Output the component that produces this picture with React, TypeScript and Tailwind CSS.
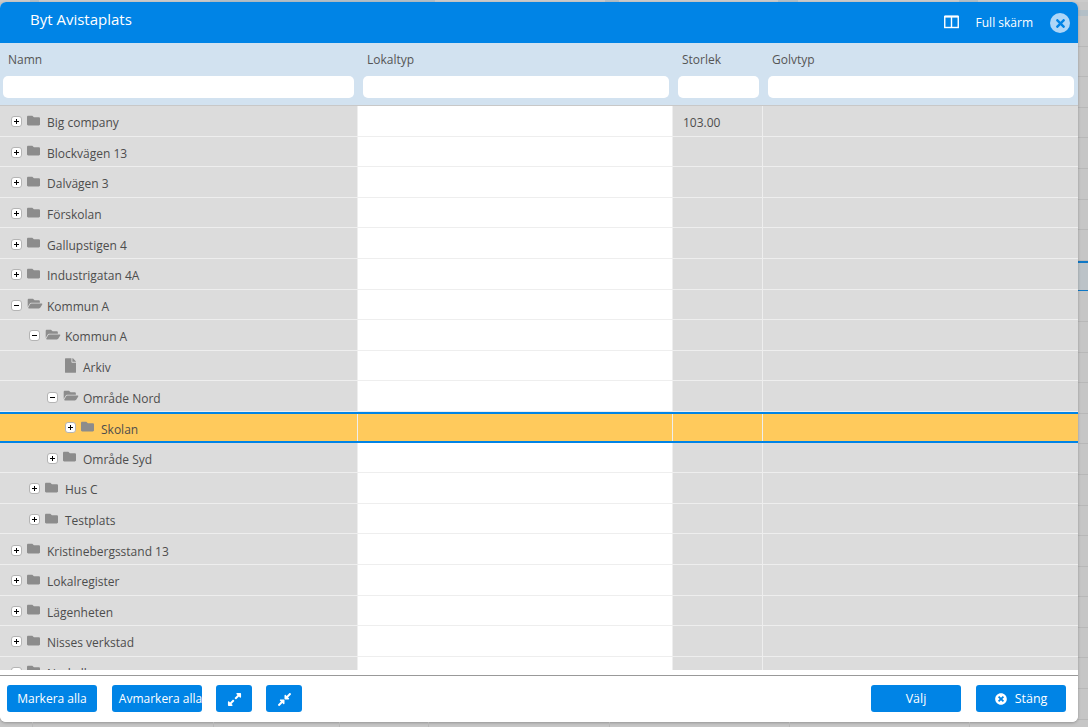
import { FaFolder, FaFolderOpen, FaFile, FaExpandAlt, FaCompressAlt, FaTimesCircle, FaTimes } from 'react-icons/fa';

type Row = { name: string; depth: number; kind: 'closed' | 'open' | 'file'; size?: string; selected?: boolean };

const rows: Row[] = [
  { name: 'Big company', depth: 0, kind: 'closed', size: '103.00' },
  { name: 'Blockvägen 13', depth: 0, kind: 'closed' },
  { name: 'Dalvägen 3', depth: 0, kind: 'closed' },
  { name: 'Förskolan', depth: 0, kind: 'closed' },
  { name: 'Gallupstigen 4', depth: 0, kind: 'closed' },
  { name: 'Industrigatan 4A', depth: 0, kind: 'closed' },
  { name: 'Kommun A', depth: 0, kind: 'open' },
  { name: 'Kommun A', depth: 1, kind: 'open' },
  { name: 'Arkiv', depth: 2, kind: 'file' },
  { name: 'Område Nord', depth: 2, kind: 'open' },
  { name: 'Skolan', depth: 3, kind: 'closed', selected: true },
  { name: 'Område Syd', depth: 2, kind: 'closed' },
  { name: 'Hus C', depth: 1, kind: 'closed' },
  { name: 'Testplats', depth: 1, kind: 'closed' },
  { name: 'Kristinebergsstand 13', depth: 0, kind: 'closed' },
  { name: 'Lokalregister', depth: 0, kind: 'closed' },
  { name: 'Lägenheten', depth: 0, kind: 'closed' },
  { name: 'Nisses verkstad', depth: 0, kind: 'closed' },
  { name: 'Nyckelhus', depth: 0, kind: 'closed' },
];

const indent = ['w-[11px]', 'w-[29px]', 'w-[47px]', 'w-[65px]'];
const columns = 'grid grid-cols-[358px_315px_90px_315px]';

function Toggle({ open }: { open: boolean }) {
  return (
    <span className="relative flex h-[11px] w-[11px] shrink-0 items-center justify-center rounded-[3px] border border-[#b4b4b4] bg-white">
      <span className="h-px w-[5px] bg-black" />
      {!open && <span className="absolute h-[5px] w-px bg-black" />}
    </span>
  );
}

function TreeRow({ row }: { row: Row }) {
  const tone = row.selected ? 'bg-[#ffca5c]' : 'bg-[#dcdcdc]';
  const edge = row.selected
    ? 'border-t-2 border-b-2 border-[#0084e6]'
    : 'border-b border-[#eeeeee]';
  return (
    <div className={`${columns} h-[30.6px] shrink-0 ${edge} ${row.selected ? 'bg-[#ffca5c]' : ''}`}>
      <div className={`flex items-center ${tone} border-r border-[#eeeeee] ${row.selected ? 'pt-[1px]' : 'pt-[2px]'}`}>
        <span className={`${indent[row.depth]} shrink-0`} />
        {row.kind === 'file' ? (
          <span className="flex w-[36px] shrink-0 justify-end pr-[7px]">
            <FaFile className="mb-[3px] h-[15px] w-[11px] text-[#8c8c8c]" />
          </span>
        ) : (
          <>
            <Toggle open={row.kind === 'open'} />
            <span className="flex w-[25px] shrink-0 pl-[5px]">
              {row.kind === 'open' ? (
                <FaFolderOpen className="mb-[3px] h-[13px] w-[16px] text-[#8c8c8c]" />
              ) : (
                <FaFolder className="mb-[3px] h-[13px] w-[13px] text-[#8c8c8c]" />
              )}
            </span>
          </>
        )}
        <span className={`whitespace-nowrap text-[12px] text-[#4d4d4d] ${row.selected ? 'pt-[5px]' : 'pt-[3px]'}`}>{row.name}</span>
      </div>
      <div className={`${row.selected ? 'bg-[#ffca5c]' : 'bg-white'} border-r border-[#eeeeee]`} />
      <div className={`flex items-center pl-[10px] pt-[4px] text-[12px] text-[#4d4d4d] ${tone} border-r border-[#eeeeee]`}>
        {row.size}
      </div>
      <div className={tone} />
    </div>
  );
}

function FilterCell({ label, pad, labelPad }: { label: string; pad: string; labelPad: string }) {
  return (
    <div className={`flex flex-col ${pad}`}>
      <span className={`mt-[8px] h-[25px] ${labelPad} text-[12px] font-medium leading-[18px] text-[#555555]`}>{label}</span>
      <div className="h-[22px] rounded-[5px] bg-white" />
    </div>
  );
}

function Btn({ children, wide, large }: { children: React.ReactNode; wide?: boolean; large?: boolean }) {
  return (
    <button className={`flex h-[27px] items-center justify-center rounded-[3px] bg-[#0084e6] pt-[1px] text-white ${large ? 'text-[12.5px]' : 'text-[12px]'} ${wide ? 'w-[90px]' : 'w-[36px]'}`}>
      {children}
    </button>
  );
}

const lineRows = Array.from({ length: 24 });
const bottomTicks = ['w-[33px]', 'w-[181px]', 'w-[126px]', 'w-[89px]', 'w-[181px]', 'w-[180px]', 'w-[180px]'];

export default function App() {
  return (
    <div className="relative h-[727px] w-[1088px] overflow-hidden bg-[#c6c6c6]" style={{ fontFamily: '"Open Sans", "Noto Sans", sans-serif' }}>
      {/* dimmed page behind the dialog */}
      <div className="flex h-[2px] bg-[#cbcbcb]">
        <span className="ml-[30px] w-[9px] bg-[#b3bfc7]" />
        <span className="ml-[171px] w-[225px] bg-[#b3bfc7]" />
        <span className="ml-[170px] w-[14px] bg-[#b3bfc7]" />
        <span className="ml-[159px] w-[20px] bg-[#b3bfc7]" />
        <span className="ml-[161px] w-[19px] bg-[#b3bfc7]" />
      </div>
      <div className="ml-auto w-[10px]">
        <div className="mt-[8px] h-[6px] bg-[#b3bfc7]" />
        {lineRows.map((_, i) => (
          <div
            key={i}
            className={`h-[30.6px] border-b ${i === 8 ? 'border-y-2 border-[#0e78c6] bg-[#bcc3c8]' : 'border-[#b8b8b8]'}`}
          />
        ))}
      </div>

      {/* dialog */}
      <div className="absolute left-0 top-[2px] flex h-[720px] w-[1078px] flex-col overflow-hidden rounded-[6px] bg-white shadow-[0_1px_3px_rgba(0,0,0,0.25)]">
        <div className="flex h-[41px] shrink-0 items-center bg-[#0084e6] pl-[30px] pr-[8px] text-white">
          <span className="mb-[6px] text-[15px] font-medium">Byt Avistaplats</span>
          <svg className="mb-[1px] ml-auto h-[14px] w-[15px]" viewBox="0 0 15 14" fill="none" stroke="white">
            <rect x="0.75" y="1.5" width="13.5" height="11" strokeWidth="1.4" />
            <path d="M0.75 1.5h13.5" strokeWidth="2" />
            <path d="M7.5 1.5v11" strokeWidth="1.4" />
          </svg>
          <span className="ml-[17px] text-[12px]">Full skärm</span>
          <span className="ml-[17px] mt-[1px] flex h-[20px] w-[20px] items-center justify-center rounded-full bg-[#aed6f7]">
            <FaTimes className="h-[13px] w-[13px] text-[#0084e6]" />
          </span>
        </div>

        <div className={`${columns} h-[63px] shrink-0 border-b border-[#c8c8c8] bg-[#d2e2f0]`}>
          <FilterCell label="Namn" pad="pl-[3px] pr-[4px]" labelPad="pl-[5px]" />
          <FilterCell label="Lokaltyp" pad="pl-[5px] pr-[4px]" labelPad="pl-[4px]" />
          <FilterCell label="Storlek" pad="pl-[5px] pr-[4px]" labelPad="pl-[4px]" />
          <FilterCell label="Golvtyp" pad="pl-[5px] pr-[4px]" labelPad="pl-[4px]" />
        </div>

        <div className="flex min-h-0 flex-1 flex-col overflow-hidden">
          {rows.map((row, i) => (
            <TreeRow key={i} row={row} />
          ))}
        </div>

        <div className="h-[5px] shrink-0 bg-white" />
        <div className="flex h-[47px] shrink-0 items-start border-t border-[#999999] bg-white pl-[7px] pr-[12px] pt-[9px]">
          <Btn wide>Markera alla</Btn>
          <span className="ml-[15px]">
            <Btn wide>
              <span className="whitespace-nowrap pl-[7px]">Avmarkera alla</span>
            </Btn>
          </span>
          <span className="ml-[14px]">
            <Btn>
              <FaExpandAlt className="h-[15px] w-[15px]" />
            </Btn>
          </span>
          <span className="ml-[14px]">
            <Btn>
              <FaCompressAlt className="h-[15px] w-[15px]" />
            </Btn>
          </span>
          <span className="ml-auto">
            <Btn wide large>Välj</Btn>
          </span>
          <span className="ml-[15px]">
            <Btn wide large>
              <FaTimesCircle className="mr-[8px] h-[12px] w-[12px]" />
              Stäng
            </Btn>
          </span>
        </div>
      </div>

      {/* faint column ticks below the dialog */}
      <div className="absolute bottom-0 left-0 flex h-[5px]">
        {bottomTicks.map((w, i) => (
          <span key={i} className={`${w} border-r border-[#b8b8b8]`} />
        ))}
      </div>
    </div>
  );
}
